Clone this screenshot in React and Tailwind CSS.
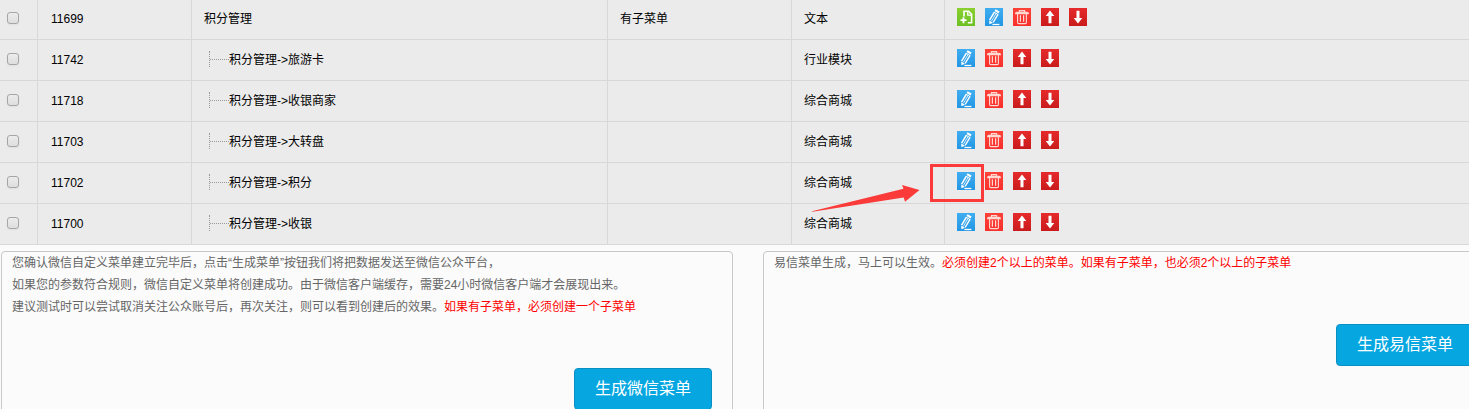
import React, { useState } from "react";

const menus = [
  { id: 11699, name: "积分管理", note: "有子菜单", type: "文本", parent: true },
  { id: 11742, name: "积分管理->旅游卡", type: "行业模块" },
  { id: 11718, name: "积分管理->收银商家", type: "综合商城" },
  { id: 11703, name: "积分管理->大转盘", type: "综合商城" },
  { id: 11702, name: "积分管理->积分", type: "综合商城", marked: true },
  { id: 11700, name: "积分管理->收银", type: "综合商城" },
];

function IconButton({ label, className, children }) {
  return (
    <button
      type="button"
      aria-label={label}
      className={`block h-[18px] w-[18px] cursor-pointer ${className}`}
    >
      <svg viewBox="0 0 18 18" className="block h-full w-full" fill="none" stroke="#fff">
        {children}
      </svg>
    </button>
  );
}

function AddButton() {
  return (
    <IconButton label="添加子菜单" className="bg-linear-to-b from-[#8ad02f] to-[#6cc024]">
      <path d="M7 8.6V3.3h4.6l3 3v8.4h-3.8" strokeWidth="1.6" />
      <path d="M10.8 3.3v3.8h3.8" strokeWidth="1.3" />
      <path d="M6.5 9.2v6M3.5 12.2h6" strokeWidth="1.8" />
    </IconButton>
  );
}

function EditButton() {
  return (
    <IconButton label="编辑" className="bg-linear-to-b from-[#3fadf0] to-[#2296e4]">
      <path d="M10.6 1.2l4 2.4-1.1 1.9-4-2.4z" fill="#fff" stroke="none" />
      <path d="M9.4 4.2L4.6 12.2" strokeWidth="1.5" />
      <path d="M13 6.3l-4.8 8" strokeWidth="1.3" />
      <path d="M11.2 5.3l-4.8 8" strokeWidth="0.8" />
      <path d="M9 4.2l4.3 2.5" strokeWidth="1" />
      <path d="M4.2 12.4l3.8 2.3-3.6 1.6z" fill="#fff" stroke="none" />
      <path d="M7.4 16.5h7" strokeWidth="1.3" />
    </IconButton>
  );
}

function DeleteButton() {
  return (
    <IconButton label="删除" className="bg-linear-to-b from-[#ff4238] to-[#f8302c]">
      <path
        d="M6.4 4.3V2.6h5.2v1.7M2.6 5.6c0-.9.5-1.2 1.2-1.2h10.4c.7 0 1.2.3 1.2 1.2zM4.6 5.8v8.6c0 .8.4 1.2 1.2 1.2h6.4c.8 0 1.2-.4 1.2-1.2V5.8"
        stroke="#ffd9d2"
        strokeWidth="1.1"
      />
      <path d="M7.4 7.3v6.4M10.6 7.3v6.4" stroke="#ffd9d2" strokeWidth="1.2" />
    </IconButton>
  );
}

function MoveButton({ down }) {
  return (
    <IconButton
      label={down ? "下移" : "上移"}
      className="bg-linear-to-b from-[#e62a2b] to-[#c91b1c]"
    >
      <path
        d={
          down
            ? "M7.5 2.8h3v7.2h2.8L9 15.4 4.7 10h2.8z"
            : "M9 2.6l4.3 5.4h-2.8v7.2h-3V8H4.7z"
        }
        fill="#fff"
        stroke="none"
      />
    </IconButton>
  );
}

// red frame + arrow around the edit icon
function Marker() {
  return (
    <>
      <span className="pointer-events-none absolute -top-2 left-[-27px] h-[38px] w-[54px] border-3 border-[#fb3b3a]" />
      <svg
        className="pointer-events-none absolute top-[11px] left-[-145px] h-[30px] w-[108px]"
        viewBox="0 0 108 30"
        fill="#fb3b3a"
      >
        <path d="M0 28.2L91.5 5.8 90 2l17.5 5L93 18.8l-1.3-4.3L.5 28.8z" />
      </svg>
    </>
  );
}

function MenuRow({ menu, checked, onToggle }) {
  const cell = "border-b border-r border-[#d8d8d8] pl-3";

  return (
    <tr className="h-[41px]">
      <td className="border-r border-b border-[#d8d8d8] pl-[7px]">
        <input
          type="checkbox"
          aria-label={`选择 ${menu.id}`}
          checked={checked}
          onChange={onToggle}
          className="mb-0.5 block h-3 w-3 appearance-none rounded-[3px] border border-[#a6a6a6] bg-linear-to-b from-[#ececec] to-[#dedede] shadow-xs checked:bg-[#888]"
        />
      </td>
      <td className="border-r border-b border-[#d8d8d8] pl-[13px]">{menu.id}</td>
      <td className={cell}>
        {menu.parent ? (
          menu.name
        ) : (
          <div className="flex items-center pl-[5px]">
            <span className="mb-0.5 flex items-center">
              <span className="h-4 border-l border-dotted border-[#999]" />
              <span className="w-[19px] border-t border-dotted border-[#999]" />
            </span>
            <span>{menu.name}</span>
          </div>
        )}
      </td>
      <td className={cell}>{menu.note}</td>
      <td className={cell}>{menu.type}</td>
      <td className="border-b border-[#d8d8d8] pb-1 pl-3">
        <div className="flex gap-2.5">
          {menu.parent && <AddButton />}
          <div className="relative">
            <EditButton />
            {menu.marked && <Marker />}
          </div>
          <DeleteButton />
          <MoveButton />
          <MoveButton down />
        </div>
      </td>
    </tr>
  );
}

function Panel({ button, children }) {
  return (
    <section className="rounded border border-[#c8c8c8] px-2.5 pb-5 text-[#666]">
      <div className="leading-[22px]">{children}</div>
      <div className="mt-[50px] mr-2.5 flex justify-end">
        <button
          type="button"
          className="h-[42px] cursor-pointer rounded border border-[#0a8fc4] bg-[#06a7e1] px-5 text-base text-white hover:bg-[#0599cf]"
        >
          {button}
        </button>
      </div>
    </section>
  );
}

export default function App() {
  const [selected, setSelected] = useState([]);

  const toggle = (id) => {
    setSelected(
      selected.includes(id) ? selected.filter((s) => s !== id) : [...selected, id]
    );
  };

  return (
    <div className="h-screen overflow-hidden bg-[#fbfbfb] font-['Liberation_Sans','Noto_Sans_CJK_SC',sans-serif] text-xs text-black">
      <div className="-mt-px min-w-[1495px]">
        <table className="w-full table-fixed border-separate border-spacing-0 bg-[#ebebeb]">
          <colgroup>
            <col className="w-[38px]" />
            <col className="w-[154px]" />
            <col className="w-[416px]" />
            <col className="w-[184px]" />
            <col className="w-[153px]" />
            <col />
          </colgroup>
          <tbody>
            {menus.map((menu) => (
              <MenuRow
                key={menu.id}
                menu={menu}
                checked={selected.includes(menu.id)}
                onToggle={() => toggle(menu.id)}
              />
            ))}
          </tbody>
        </table>

        <div className="mt-1.5 grid grid-cols-2 gap-[30px] pl-px">
          <Panel button="生成微信菜单">
            <p>您确认微信自定义菜单建立完毕后，点击“生成菜单”按钮我们将把数据发送至微信公众平台，</p>
            <p>如果您的参数符合规则，微信自定义菜单将创建成功。由于微信客户端缓存，需要24小时微信客户端才会展现出来。</p>
            <p>
              建议测试时可以尝试取消关注公众账号后，再次关注，则可以看到创建后的效果。
              <span className="text-[#f00]">如果有子菜单，必须创建一个子菜单</span>
            </p>
          </Panel>
          <Panel button="生成易信菜单">
            <p>
              易信菜单生成，马上可以生效。
              <span className="text-[#f00]">
                必须创建2个以上的菜单。如果有子菜单，也必须2个以上的子菜单
              </span>
            </p>
          </Panel>
        </div>
      </div>
    </div>
  );
}
